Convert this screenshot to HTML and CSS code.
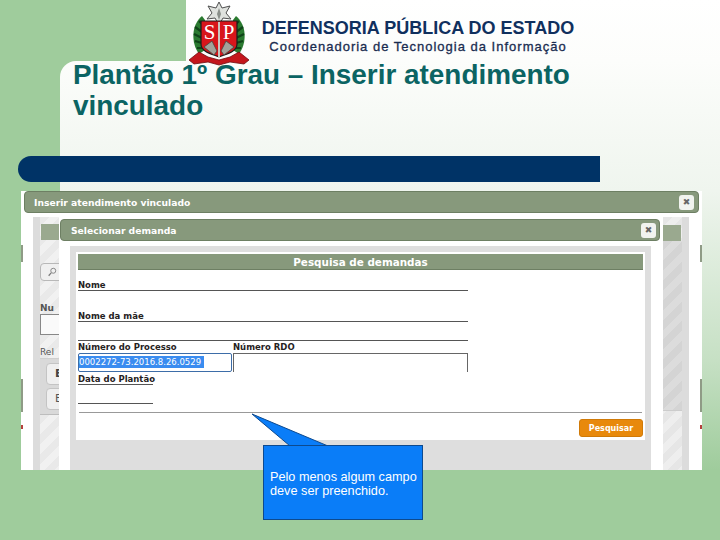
FILE: index.html
```html
<!DOCTYPE html>
<html lang="pt-BR">
  <head>
    <meta charset="UTF-8" />
    <title>Plantão 1º Grau</title>
    <link rel="stylesheet" href="styles.css">
  </head>
  <body>
    <div class="slide">
      <div class="sheet-top"></div>
      <div class="sheet-main"></div>

      <svg class="emblem" viewBox="0 0 62 64" width="62" height="64">
        <polygon points="31,0 34,6 42,4 38,11 43,17 35,16 31,23 27,16 19,17 24,11 20,4 28,6" fill="#dfe2de" stroke="#4f4f4f" stroke-width="1" />
        <path d="M31 6 L33 12 L31 18 L29 12 Z" fill="#8a8f8a" />
        <path d="M14 14 C3 23 3 41 11 52 L17 48 L17 18 Z" fill="#2a7a30" />
        <path d="M48 14 C59 23 59 41 51 52 L45 48 L45 18 Z" fill="#2a7a30" />
        <path d="M11 19 L16 24 M7 25 L14 30 M6 32 L14 36 M7 39 L14 41 M9 46 L15 46 M51 19 L46 24 M55 25 L48 30 M56 32 L48 36 M55 39 L48 41 M53 46 L47 46" stroke="#0f4418" stroke-width="2.2" />
        <path d="M13 19 H49 V42 C49 50 38 52 31 55 C24 52 13 50 13 42 Z" fill="#d8151b" stroke="#1c1c1c" stroke-width="1.2" />
        <rect x="30" y="20" width="2" height="36" fill="#c9c4be" />
        <text class="emblem-letter" x="21.5" y="37">S</text>
        <text class="emblem-letter" x="40.5" y="37">P</text>
        <path d="M16 45 L24 39 L29 49 L26 53 Z M46 45 L38 39 L33 49 L36 53 Z" fill="#a3a29a" stroke="#45453f" stroke-width=".8" />
        <path d="M1 58 L11 50 L20 55 L31 58 L42 55 L51 50 L61 58 L56 62 L42 60 L31 63 L20 60 L6 62 Z" fill="#c4161c" stroke="#6e0c10" stroke-width=".8" />
      </svg>

      <header class="org">
        <div class="org-name">DEFENSORIA PÚBLICA DO ESTADO</div>
        <div class="org-sub">Coordenadoria de Tecnologia da Informação</div>
      </header>

      <h1 class="title">Plantão 1º Grau – Inserir atendimento vinculado</h1>
      <div class="bar"></div>

      <div class="shot">
        <div class="edge left"></div>
        <div class="edge right"></div>
        <div class="win-bar">
          <span>Inserir atendimento vinculado</span>
          <b class="close">✖</b>
        </div>

        <div class="back">
          <div class="back-head"></div>
          <div class="back-search">
            <svg viewBox="0 0 12 12" width="10" height="10"><circle cx="7.5" cy="4.5" r="3" fill="none" stroke="#777" /><path d="M5 7 L2 10.5" stroke="#777" stroke-width="1.4" /></svg>
          </div>
          <div class="back-label first">Nu</div>
          <div class="back-input"></div>
          <div class="back-label">Rel</div>
          <div class="back-group">
            <div class="back-btn bold">E</div>
            <div class="back-btn">E</div>
          </div>
        </div>
        <div class="back-right">
          <div class="back-head"></div>
          <div class="back-thumb"></div>
        </div>

        <div class="dialog">
          <div class="win-bar inner">
            <span>Selecionar demanda</span>
            <b class="close">✖</b>
          </div>
          <div class="dialog-body">
            <div class="form">
              <div class="form-head">Pesquisa de demandas</div>
              <div class="field-name">Nome</div>
              <div class="field-name second">Nome da mãe</div>
              <div class="rule"></div>
              <div class="pair">
                <div class="pair-process">
                  <div class="lbl">Número do Processo</div>
                  <div class="input focus"><span class="selected">0002272-73.2016.8.26.0529</span></div>
                </div>
                <div class="pair-rdo">
                  <div class="lbl">Número RDO</div>
                  <div class="input"></div>
                </div>
              </div>
              <div class="field-date">Data do Plantão</div>
              <div class="date-rule"></div>
              <div class="long-rule"></div>
              <div class="actions"><button class="search">Pesquisar</button></div>
            </div>
          </div>
        </div>
      </div>

      <svg class="pointer" viewBox="0 0 80 36" width="80" height="36">
        <polygon points="1,1 39,33 77,33" fill="#0a7df8" stroke="#0d4a8f" stroke-width="1" />
      </svg>
      <div class="callout">Pelo menos algum campo deve ser preenchido.</div>
    </div>
  </body>
</html>
```

FILE: styles.css
```css
html,
body {
  margin: 0;
  padding: 0;
}
.slide {
  position: relative;
  width: 720px;
  height: 540px;
  overflow: hidden;
  background-color: #9fcc9c;
  font-family: "Liberation Sans", Arial, sans-serif;
}
.sheet-top {
  position: absolute;
  left: 186px;
  top: 0;
  right: 0;
  height: 61px;
  background: linear-gradient(180deg, #ffffff, #fcfdfb);
}
.sheet-main {
  position: absolute;
  left: 60px;
  top: 61px;
  right: 0;
  bottom: 0;
  border-top-left-radius: 16px;
  background: linear-gradient(180deg, #fcfdfb 0, #eff5ee 130px, #c6e0c4 300px, #9fcc9c 409px);
}
.emblem {
  position: absolute;
  left: 188px;
  top: 2px;
}
.emblem-letter {
  font-family: "Liberation Serif", serif;
  font-size: 21px;
  fill: #fff;
  text-anchor: middle;
}
.org {
  position: absolute;
  left: 241px;
  top: 18px;
  width: 354px;
  text-align: center;
  font-weight: bold;
}
.org-name {
  font-size: 18px;
  line-height: 20px;
  white-space: nowrap;
  color: #10305e;
}
.org-sub {
  margin-top: 1px;
  font-size: 13px;
  line-height: 16px;
  letter-spacing: 1px;
  font-weight: normal;
  white-space: nowrap;
  -webkit-text-stroke: 0.3px #1a2c50;
  color: #1a2c50;
}
.title {
  position: absolute;
  left: 73px;
  top: 59px;
  width: 520px;
  margin: 0;
  font-size: 27.9px;
  line-height: 31px;
  font-weight: bold;
  color: #0b6463;
}
.bar {
  position: absolute;
  left: 18px;
  top: 156px;
  width: 582px;
  height: 26px;
  border-radius: 13px 0 0 13px;
  background-color: #003366;
}

/* screenshot pasted on the slide */
.shot {
  position: absolute;
  left: 21px;
  top: 191px;
  width: 681px;
  height: 279px;
  overflow: hidden;
  background-color: #fff;
  font-family: "DejaVu Sans", Verdana, sans-serif;
}
.edge {
  position: absolute;
  top: 0;
  width: 2px;
  height: 279px;
  background: linear-gradient(180deg,
    #fff 0 54px, #8f9b86 54px 71px, #fff 71px 188px,
    #8f9b86 188px 221px, #fff 221px 234px, #b5403c 234px 238px, #fff 238px);
}
.edge.left {
  left: 0;
}
.edge.right {
  left: 679px;
}
.win-bar {
  display: flex;
  align-items: center;
  justify-content: space-between;
  box-sizing: border-box;
  height: 22px;
  margin: 0 3px;
  padding: 0 4px 0 9px;
  border: 1px solid #6d7f63;
  border-radius: 4px;
  background-color: #87997c;
  color: #fff;
  font-size: 9.2px;
  font-weight: bold;
}
.win-bar.inner {
  margin: 0 3px 0 1px;
  padding-left: 10px;
  padding-right: 3px;
}
.close {
  display: block;
  width: 15px;
  height: 15px;
  border-radius: 3px;
  background-color: #f1f3ef;
  color: #666;
  font-size: 9px;
  line-height: 15px;
  text-align: center;
}
.back {
  position: absolute;
  left: 12px;
  top: 26px;
  width: 26px;
  height: 253px;
  box-sizing: border-box;
  padding-left: 7px;
  background-color: #dcdcdc;
  color: #555;
  font-size: 9px;
}
.back::before {
  content: "";
  position: absolute;
  left: 7px;
  top: 0;
  right: 0;
  bottom: 0;
  background: repeating-linear-gradient(135deg, #e9e9e9 0 7px, #f1f1f1 7px 14px);
}
.back > * {
  position: relative;
}
.back-head {
  height: 16px;
  margin-top: 7px;
  margin-left: 1px;
  background-color: #9aa98f;
}
.back-search {
  box-sizing: border-box;
  width: 26px;
  height: 18px;
  margin-top: 23px;
  padding: 3px 0 0 6px;
  border: 1px solid #b8b8b8;
  border-radius: 4px;
  background-color: #f0f0f0;
}
.back-label {
  height: 11px;
  line-height: 11px;
  white-space: nowrap;
}
.back-label.first {
  margin-top: 22px;
  font-weight: bold;
}
.back-input {
  width: 26px;
  height: 19px;
  margin-bottom: 12px;
  border: 1px solid #888;
  background-color: #fafafa;
}
.back-group {
  box-sizing: border-box;
  height: 57px;
  padding-top: 4px;
  border-top: 1px solid #cfcfcf;
  border-bottom: 1px solid #bdbdbd;
  background-color: #d9d9d9;
}
.back-btn {
  box-sizing: border-box;
  width: 22px;
  height: 22px;
  margin: 3px 0 0 6px;
  padding-left: 8px;
  border: 1px solid #c4c4c4;
  border-radius: 4px;
  background-color: #efefef;
  font-size: 11px;
  line-height: 20px;
}
.back-btn.bold {
  margin-top: 0;
  font-weight: bold;
  color: #444;
}
.back-right {
  position: absolute;
  left: 642px;
  top: 26px;
  width: 19px;
  height: 253px;
  border-right: 7px solid #dcdcdc;
  background: repeating-linear-gradient(135deg, #e6e6e6 0 7px, #eeeeee 7px 14px);
}
.back-right .back-head {
  margin: 8px 1px 0 0;
}
.back-thumb {
  height: 169px;
  border-bottom: 1px solid #ccc;
  background: repeating-linear-gradient(135deg, #d4d4d4 0 7px, #dcdcdc 7px 14px);
}
.dialog {
  position: absolute;
  left: 38px;
  top: 26px;
  width: 604px;
  height: 253px;
  padding-top: 2px;
  background-color: #fff;
}
.dialog-body {
  box-sizing: border-box;
  height: 229px;
  margin: 5px 12px 0 11px;
  padding: 6px 6px 0;
  background-color: #dedede;
}
.form {
  box-sizing: border-box;
  height: 188px;
  padding: 2px 2px 0;
  background-color: #fff;
  color: #26221e;
  font-size: 8.5px;
  font-weight: bold;
}
.form-head {
  height: 16px;
  line-height: 16px;
  margin-bottom: 10px;
  border-bottom: 1px solid #6d7f63;
  box-sizing: border-box;
  background-color: #87997c;
  color: #fff;
  font-size: 10.4px;
  text-align: center;
}
.field-name {
  box-sizing: border-box;
  width: 390px;
  height: 11px;
  line-height: 10px;
  border-bottom: 1px solid #555;
}
.field-name.second {
  margin-top: 20px;
}
.rule {
  width: 390px;
  height: 1px;
  margin-top: 18px;
  background-color: #555;
}
.pair {
  display: flex;
  gap: 1px;
  margin-top: 1px;
}
.lbl {
  height: 11px;
  line-height: 11px;
}
.pair-process {
  width: 154px;
}
.pair-rdo {
  width: 235px;
}
.input {
  box-sizing: border-box;
  height: 19px;
  border: 1px solid #666;
  border-bottom: 0;
  font-weight: normal;
}
.input.focus {
  border: 1px solid #3d6da8;
  border-radius: 2px;
  padding-top: 2px;
}
.selected {
  display: block;
  width: 125px;
  height: 12px;
  line-height: 12px;
  overflow: hidden;
  white-space: nowrap;
  background-color: #3a8cf0;
  color: #fff;
  font-size: 8.5px;
}
.field-date {
  box-sizing: border-box;
  width: 75px;
  height: 11px;
  margin-top: 2px;
  line-height: 10px;
  white-space: nowrap;
  border-bottom: 1px solid #555;
}
.date-rule {
  width: 75px;
  height: 1px;
  margin-top: 18px;
  background-color: #555;
}
.long-rule {
  height: 1px;
  margin: 8px 1px 0 1px;
  background-color: #999;
}
.actions {
  display: flex;
  justify-content: flex-end;
  margin-top: 6px;
}
.search {
  width: 64px;
  height: 18px;
  padding: 0;
  border: 1px solid #d07a08;
  border-radius: 3px;
  background-color: #e8890c;
  color: #fff;
  font-family: inherit;
  font-size: 8px;
  font-weight: bold;
}
.pointer {
  position: absolute;
  left: 251px;
  top: 413px;
}
.callout {
  position: absolute;
  left: 263px;
  top: 445px;
  box-sizing: border-box;
  width: 160px;
  height: 75px;
  padding: 24px 2px 0 6px;
  border: 1px solid #0d4a8f;
  background-color: #0a7df8;
  color: #fff;
  font-size: 12.7px;
  line-height: 14px;
}
```
